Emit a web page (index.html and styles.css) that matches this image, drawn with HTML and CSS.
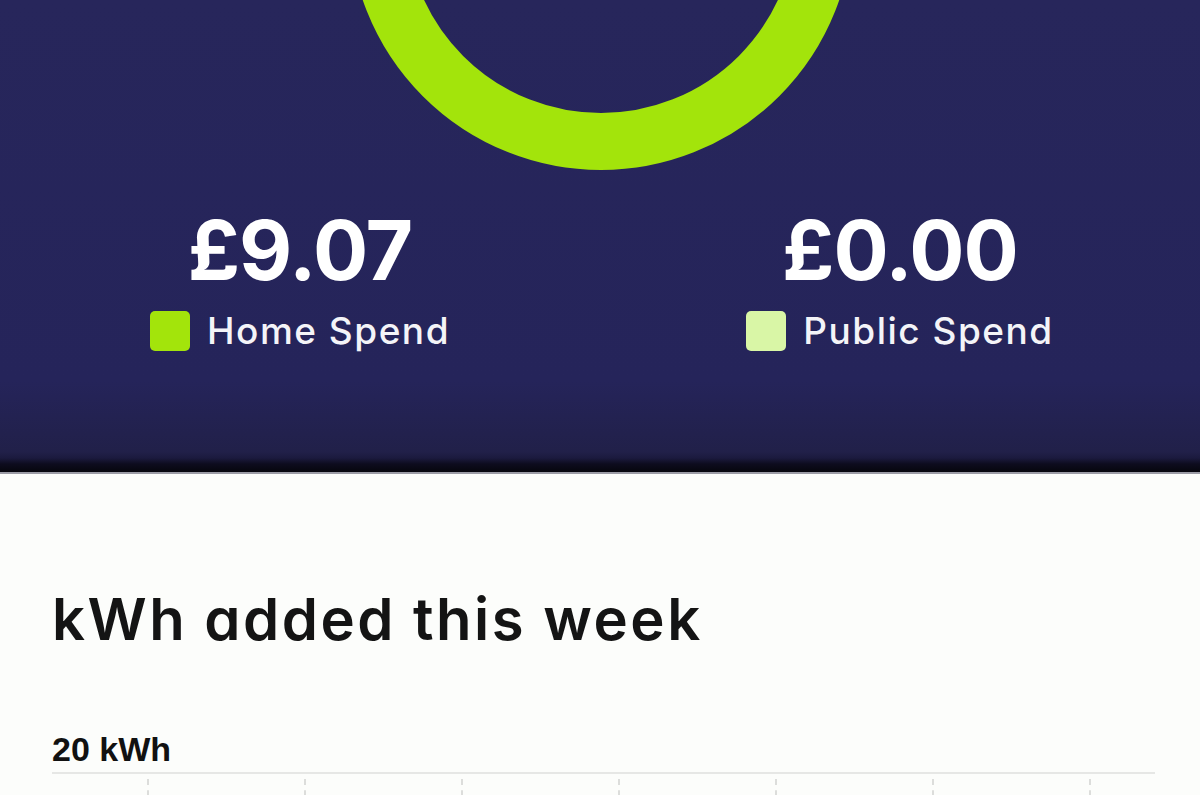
FILE: index.html
```html
<!DOCTYPE html>
<html lang="en">
<head>
    <meta charset="UTF-8">
    <meta name="viewport" content="width=device-width, initial-scale=1.0">
    <title>Charging Spend</title>
    <link rel="stylesheet" href="styles.css">
</head>
<body>
    <div class="summary">
        <svg class="donut" width="1200" height="172" viewBox="0 0 1200 172">
            <circle cx="601" cy="-82" r="223.5" fill="none" stroke="#a3e40b" stroke-width="57"/>
        </svg>

        <div class="spend-grid">
            <div class="spend">
                <div class="amount">£9.07</div>
                <div class="legend"><span class="swatch home"></span>Home Spend</div>
            </div>
            <div class="spend">
                <div class="amount">£0.00</div>
                <div class="legend"><span class="swatch public"></span>Public Spend</div>
            </div>
        </div>
    </div>

    <section class="weekly">
        <h2>kWh added this week</h2>
        <div class="axis-label">20 kWh</div>
        <div class="gridline"></div>
        <div class="days">
            <div class="day"></div>
            <div class="day"></div>
            <div class="day"></div>
            <div class="day"></div>
            <div class="day"></div>
            <div class="day"></div>
            <div class="day"></div>
        </div>
    </section>
</body>
</html>
```

FILE: styles.css
```css
body {
    margin: 0;
    padding: 0;
    font-family: Inter, "Noto Sans", sans-serif;
    font-feature-settings: "cv11";
    background-color: #fcfdfb;
    overflow: hidden;
}

.summary {
    height: 472px;
    background: linear-gradient(to bottom, #27265b 0, #25245a 380px, #212049 452px, #1b1a3e 458px, #0d0c1e 464px, #06060d 472px);
    border-bottom: 2px solid #9c9ca6;
}

.donut {
    display: block;
}

.spend-grid {
    display: grid;
    grid-template-columns: 1fr 1fr;
    margin-top: 38px;
}

.spend {
    display: flex;
    flex-direction: column;
    align-items: center;
}

.amount {
    color: #fff;
    font-size: 82px;
    font-weight: 700;
    line-height: 1;
    letter-spacing: -1px;
}

.legend {
    display: flex;
    align-items: center;
    gap: 17px;
    margin-top: 16px;
    color: #f4f4f8;
    font-size: 37px;
    font-weight: 500;
    letter-spacing: 1.5px;
}

.swatch {
    width: 40px;
    height: 40px;
    border-radius: 5px;
}

.swatch.home {
    background-color: #a3e40b;
}

.swatch.public {
    background-color: #d9f6a6;
}

.weekly {
    padding-top: 110px;
}

.weekly h2 {
    margin: 0 0 0 52px;
    font-size: 58px;
    font-weight: 600;
    line-height: 70px;
    letter-spacing: 2.5px;
    color: #141414;
}

.axis-label {
    margin: 78px 0 0 52px;
    font-family: "Liberation Sans", Arial, sans-serif;
    font-size: 34px;
    font-weight: 700;
    line-height: 1;
    color: #111;
}

.gridline {
    height: 2px;
    margin: 6px 45px 0 52px;
    background-color: #e6e7e5;
}

.days {
    display: grid;
    grid-template-columns: repeat(7, 157px);
    margin: 5px 0 0 70px;
}

.day {
    height: 40px;
    border-left: 2px dashed #dcdddb;
    margin-left: 77px;
}
```
